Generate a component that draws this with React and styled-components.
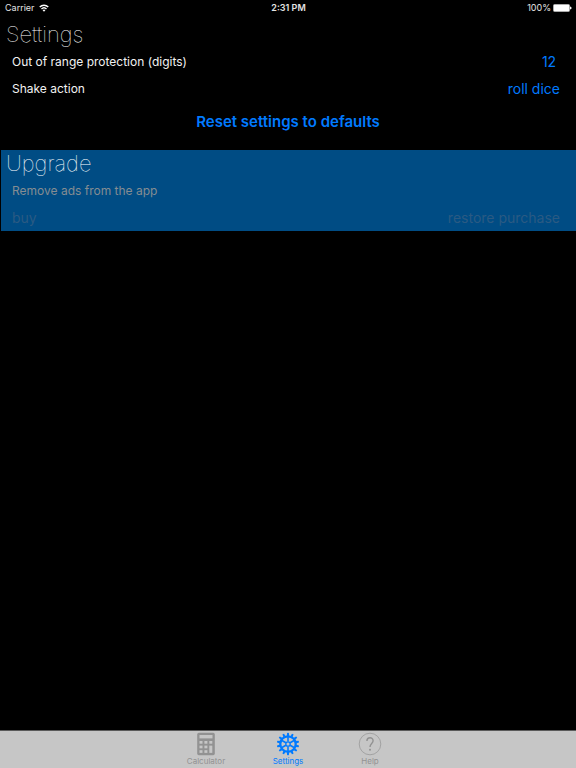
import * as React from "react";
import { useState } from "react";
import styled, { createGlobalStyle } from "styled-components";

const GlobalStyle = createGlobalStyle`
  * {
    box-sizing: border-box;
  }

  body {
    margin: 0;
    background: #000;
    font-family: Inter, "Liberation Sans", sans-serif;
  }

  button {
    margin: 0;
    padding: 0;
    border: 0;
    background: none;
    font-family: inherit;
    cursor: pointer;
  }
`;

const Screen = styled.div`
  display: flex;
  flex-direction: column;
  min-height: 100vh;
  background: #000;
  color: #fff;
`;

const StatusBar = styled.header`
  display: grid;
  grid-template-columns: 1fr auto 1fr;
  align-items: center;
  height: 16px;
  padding: 0 4px 0 5px;
  font-size: 9px;
  line-height: 16px;
  color: #e4e4e4;
`;

const StatusGroup = styled.div`
  display: flex;
  align-items: center;
  justify-content: ${(props) => (props.$end ? "flex-end" : "flex-start")};
  gap: ${(props) => (props.$end ? "2px" : "4px")};
`;

const Clock = styled.time`
  font-weight: 600;
`;

const Content = styled.main`
  flex: 1;
`;

const Section = styled.section`
  padding: 5px 16px 0 12px;
`;

const UpgradeSection = styled(Section)`
  margin-left: 1px;
  padding: 0 16px 0 11px;
  background: #004c84;
`;

const Title = styled.h1`
  margin: 0 0 0 -6px;
  font-size: 22px;
  font-weight: 100;
  line-height: 27px;
  color: #fff;
`;

const Row = styled.div`
  display: flex;
  align-items: center;
  justify-content: space-between;
  height: 27px;
  font-size: 12px;
  color: ${(props) => (props.$dim ? "#858c92" : "#f2f2f2")};
`;

const TextButton = styled.button`
  min-width: 22px;
  font-size: 14px;
  line-height: 20px;
  text-align: center;
  color: #007aff;

  &:disabled {
    color: #2a5a83;
    cursor: default;
  }
`;

const ResetRow = styled.div`
  display: flex;
  justify-content: center;
  padding: 10px 0 18px 4px;
`;

const ResetButton = styled(TextButton)`
  font-size: 15px;
  font-weight: 600;
`;

const TabBar = styled.nav`
  display: flex;
  justify-content: center;
  height: 38px;
  border-top: 1px solid #5a5a5a;
  background: #c6c6c6;
`;

const Tab = styled.button`
  display: flex;
  flex-direction: column;
  align-items: center;
  width: 82px;
  font-size: 8px;
  line-height: 10px;
  color: ${(props) => (props.$active ? "#007aff" : "#929292")};

  svg {
    display: block;
    margin-top: 1px;
  }
`;

const WifiIcon = () => (
  <svg width="10" height="8" viewBox="0 0 20 16" fill="none" stroke="#fff" strokeWidth="2.8">
    <path d="M1.5 6.2C6.2 1.3 13.8 1.3 18.5 6.2" />
    <path d="M5 10C7.8 7.2 12.2 7.2 15 10" />
    <path d="M7.2 12.4Q10 10 12.8 12.4L10 15.5Z" fill="#fff" stroke="none" />
  </svg>
);

const BatteryIcon = () => (
  <svg width="19" height="8" viewBox="0 0 19 8">
    <rect x="0.5" y="0.5" width="16" height="7" rx="1" fill="#fff" stroke="#aaa" />
    <path d="M17 2.5Q18.6 2.8 18.6 4T17 5.5Z" fill="#fff" />
  </svg>
);

const CalculatorIcon = () => (
  <svg width="24" height="24" viewBox="0 0 24 24">
    <rect x="3.2" y="0.8" width="17.6" height="22.4" rx="1.6" fill="currentColor" />
    <g fill="#c6c6c6">
      <rect x="5.5" y="3" width="13" height="3.4" />
      {[9, 13.6, 18.2].map((y) =>
        [5.5, 10.4].map((x) => (
          <rect key={x + "-" + y} x={x} y={y} width="3" height="2.7" />
        ))
      )}
      <rect x="15.3" y="9" width="3" height="2.7" />
      <rect x="15.3" y="13.6" width="3" height="7.3" />
    </g>
  </svg>
);

const GearIcon = () => (
  <svg width="24" height="24" viewBox="0 0 24 24" fill="none" stroke="currentColor">
    <circle cx="12" cy="12" r="7.7" strokeWidth="2.2" />
    <circle cx="12" cy="12" r="2.2" strokeWidth="1.3" />
    {Array.from({ length: 14 }, (_, i) => (
      <path
        key={i}
        d="M10.8 4L11.1 1Q12 0.6 12.9 1L13.2 4Z"
        fill="currentColor"
        stroke="none"
        transform={`rotate(${(i * 360) / 14} 12 12)`}
      />
    ))}
    {Array.from({ length: 6 }, (_, i) => (
      <path key={i} d="M12 9.6V5" strokeWidth="1.6" transform={`rotate(${i * 60} 12 12)`} />
    ))}
  </svg>
);

const HelpIcon = () => (
  <svg width="24" height="24" viewBox="0 0 24 24" fill="none" stroke="currentColor">
    <circle cx="12" cy="12" r="10.8" strokeWidth="0.7" />
    <path d="M8.9 9C8.9 4.6 15.1 4.8 15.1 8.7C15.1 11.5 12 11.5 12 15" strokeWidth="1.4" />
    <circle cx="12" cy="17.7" r="1" fill="currentColor" stroke="none" />
  </svg>
);

const tabs = [
  { name: "Calculator", Icon: CalculatorIcon },
  { name: "Settings", Icon: GearIcon },
  { name: "Help", Icon: HelpIcon },
];

const App = () => {
  const [current, setCurrent] = useState("Settings");

  return (
    <>
      <GlobalStyle />
      <Screen>
        <StatusBar>
          <StatusGroup>
            Carrier <WifiIcon />
          </StatusGroup>
          <Clock>2:31 PM</Clock>
          <StatusGroup $end>
            100% <BatteryIcon />
          </StatusGroup>
        </StatusBar>
        <Content>
          <Section>
            <Title>Settings</Title>
            <Row>
              <span id="digits">Out of range protection (digits)</span>
              <TextButton type="button" aria-describedby="digits">
                12
              </TextButton>
            </Row>
            <Row>
              <span id="shake">Shake action</span>
              <TextButton type="button" aria-describedby="shake">
                roll dice
              </TextButton>
            </Row>
            <ResetRow>
              <ResetButton type="button">Reset settings to defaults</ResetButton>
            </ResetRow>
          </Section>
          <UpgradeSection>
            <Title as="h2">Upgrade</Title>
            <Row $dim>Remove ads from the app</Row>
            <Row>
              <TextButton type="button" disabled>
                buy
              </TextButton>
              <TextButton type="button" disabled>
                restore purchase
              </TextButton>
            </Row>
          </UpgradeSection>
        </Content>
        <TabBar>
          {tabs.map(({ name, Icon }) => (
            <Tab
              key={name}
              type="button"
              $active={current === name}
              onClick={() => setCurrent(name)}
            >
              <Icon />
              {name}
            </Tab>
          ))}
        </TabBar>
      </Screen>
    </>
  );
};

export default App;
